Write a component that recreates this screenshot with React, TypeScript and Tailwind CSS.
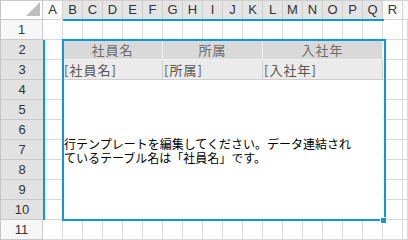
import React from 'react';

/** 列見出し */
const COLUMNS = ['A', 'B', 'C', 'D', 'E', 'F', 'G', 'H', 'I', 'J', 'K', 'L', 'M', 'N', 'O', 'P', 'Q', 'R'];

/** テーブルの列（結合セル） */
const FIELDS = [
  { label: '社員名', span: 'col-span-5' },
  { label: '所属', span: 'col-span-5' },
  { label: '入社年', span: 'col-span-6' },
];

const FONT = "font-['Liberation_Sans','Noto_Sans_CJK_JP',sans-serif]";
const JP = "font-['Noto_Sans_CJK_JP','Liberation_Sans',sans-serif]";

const gridCell = 'border-r border-b border-[#d9d9d9] bg-white';

const RowHeader: React.FC<{ n: number; selected?: boolean }> = ({ n, selected }) => (
  <div
    className={`flex items-center justify-center border-b border-[#c9c9c9] text-[13px] text-[#333] ${
      selected ? 'bg-[#e2e2e2] border-r-0' : 'bg-[#f7f7f7] border-r'
    }`}
  >
    {n}
  </div>
);

const App: React.FC = () => {
  return (
    <div className={`relative w-[408px] h-[240px] overflow-hidden bg-white border-l border-[#c4c4c4] ${FONT}`}>
      <div className="grid grid-cols-[42px_repeat(18,20px)_1fr] grid-rows-[repeat(12,20px)]">
        {/* 左上の角 */}
        <div className="relative border-r border-b border-t border-[#c9c9c9] bg-white">
          <svg className="absolute right-[2px] bottom-[3px]" width="14" height="14" viewBox="0 0 14 14">
            <polygon points="14,0 14,14 0,14" fill="#bfbfbf" />
          </svg>
        </div>
        {/* 列見出し */}
        {COLUMNS.map((c, i) => {
          const selected = i >= 1 && i <= 16;
          return (
            <div
              key={c}
              className={`flex items-center justify-center border-t border-r border-b text-[13px] text-[#333] ${
                selected ? 'bg-[#e4e4e4] border-[#cfcfcf]' : 'bg-[#f9f9f9] border-[#d4d4d4]'
              }`}
            >
              {c}
            </div>
          );
        })}
        <div className="border-t border-b border-[#d4d4d4] bg-[#f9f9f9]" />

        {/* 1行目 */}
        <RowHeader n={1} />
        {COLUMNS.map((c) => (
          <div key={c} className={gridCell} />
        ))}
        <div className={gridCell} />

        {/* 2行目：見出し */}
        <RowHeader n={2} selected />
        <div className={gridCell} />
        {FIELDS.map((f) => (
          <div
            key={f.label}
            className={`${f.span} flex items-center justify-center border-r border-b border-[#f2f2f2] bg-[#d9d9d9] text-[13px] tracking-[1px] text-[#6b6b6b] ${JP}`}
          >
            {f.label}
          </div>
        ))}
        <div className={gridCell} />
        <div className={gridCell} />

        {/* 3行目：フィールド */}
        <RowHeader n={3} selected />
        <div className={gridCell} />
        {FIELDS.map((f) => (
          <div
            key={f.label}
            className={`${f.span} flex items-center pl-[1px] border-r border-b border-[#cfcfcf] bg-[#ebebeb] text-[13px] tracking-[1px] text-[#555] ${JP}`}
          >
            [{f.label}]
          </div>
        ))}
        <div className={gridCell} />
        <div className={gridCell} />

        {/* 4〜10行目 */}
        {[4, 5, 6, 7, 8, 9, 10].map((n) => (
          <React.Fragment key={n}>
            <RowHeader n={n} selected />
            <div className={`col-start-2 ${gridCell}`} />
            {n === 4 && (
              <div className={`col-start-3 col-span-16 row-span-7 bg-white pt-[57px] pl-[1px] text-[12px] leading-[14px] text-black ${JP}`}>
                <div>行テンプレートを編集してください。データ連結され</div>
                <div>ているテーブル名は「社員名」です。</div>
              </div>
            )}
            <div className={`col-start-19 ${gridCell}`} />
            <div className={gridCell} />
          </React.Fragment>
        ))}

        {/* 11行目 */}
        <RowHeader n={11} />
        {COLUMNS.map((c) => (
          <div key={c} className={gridCell} />
        ))}
        <div className={gridCell} />
      </div>

      {/* 選択範囲の表示 */}
      <div className="absolute left-[62px] top-[19px] w-[321px] h-[2px] bg-[#0a9ad8]" />
      <div className="absolute left-[42px] top-[40px] w-[2px] h-[180px] bg-[#0a9ad8]" />
      <div className="absolute left-[61px] top-[39px] w-[324px] h-[182px] border-2 border-[#0a9ad8]" />
      <div className="absolute left-[379px] top-[217px] w-[7px] h-[7px] bg-[#0a9ad8] border border-white" />
    </div>
  );
};

export default App;
